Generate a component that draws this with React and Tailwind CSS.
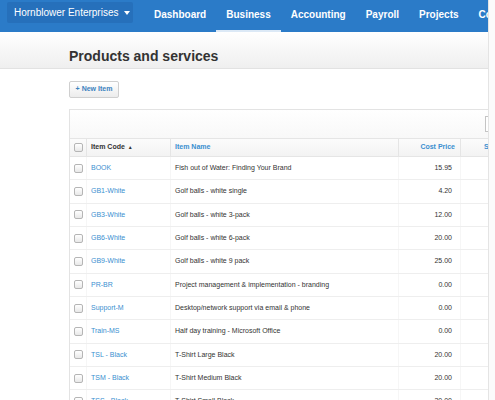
import React from 'react';

const navItems = ['Dashboard', 'Business', 'Accounting', 'Payroll', 'Projects', 'Contacts'];

const items = [
  ['BOOK', 'Fish out of Water: Finding Your Brand', '15.95'],
  ['GB1-White', 'Golf balls - white single', '4.20'],
  ['GB3-White', 'Golf balls - white 3-pack', '12.00'],
  ['GB6-White', 'Golf balls - white 6-pack', '20.00'],
  ['GB9-White', 'Golf balls - white 9 pack', '25.00'],
  ['PR-BR', 'Project management & implementation - branding', '0.00'],
  ['Support-M', 'Desktop/network support via email & phone', '0.00'],
  ['Train-MS', 'Half day training - Microsoft Office', '0.00'],
  ['TSL - Black', 'T-Shirt Large Black', '20.00'],
  ['TSM - Black', 'T-Shirt Medium Black', '20.00'],
  ['TSS - Black', 'T-Shirt Small Black', '20.00'],
];

const Checkbox = () => (
  <span className="block w-[9px] h-[9px] rounded-[2px] border border-[#b5b5b5] bg-gradient-to-b from-white to-[#e8e8e8]" />
);

const App = () => {
  return (
    <div className="flex w-[495px] h-[400px] overflow-hidden bg-white text-[#333] font-['Liberation_Sans',Arial,sans-serif]">

      {/* ── Main column ── */}
      <div className="w-[488px] shrink-0 overflow-hidden">

        {/* ── Navbar ── */}
        <nav className="h-[32px] bg-[#2b7bc8] flex items-start pt-[2px] pl-[7px] whitespace-nowrap">
          <div className="h-[21px] w-[126px] shrink-0 rounded-[2px] bg-[#2670bb] flex items-center pl-[7px] gap-[5px] text-white text-[10px]">
            Hornblower Enterprises
            <span className="w-0 h-0 border-l-[3px] border-r-[3px] border-t-[4px] border-l-transparent border-r-transparent border-t-white" />
          </div>
          <ul className="flex ml-[11px]">
            {navItems.map((n) => (
              <li
                key={n}
                className={
                  'h-[30px] px-[10px] flex items-start pt-[5px] text-white text-[10px] font-bold ' +
                  (n === 'Business' ? 'border-b-2 border-[#dce9f6]' : '')
                }
              >
                {n}
              </li>
            ))}
          </ul>
        </nav>

        {/* ── Page header ── */}
        <div className="h-[37px] bg-gradient-to-b from-white to-[#efefef] border-b border-[#e2e2e2] pl-[69px] pt-[16px]">
          <h1 className="text-[14px] leading-[16px] font-bold text-[#333]">Products and services</h1>
        </div>

        {/* ── Content ── */}
        <div className="pl-[69px] pt-[12px]">
          <button className="h-[17px] w-[50px] rounded-[2px] border border-[#cfcfcf] bg-gradient-to-b from-white to-[#ececec] text-[7px] font-bold text-[#3c82bf] flex items-center justify-center">
            + New Item
          </button>

          {/* ── Table panel ── */}
          <div className="mt-[11px] w-[560px] border border-[#e3e3e3]">
            <div className="h-[28px] bg-gradient-to-b from-white to-[#f8f8f8] flex items-start pt-[6px] pl-[415px]">
              <div className="h-[16px] w-[120px] border border-[#c4c4c4] bg-white" />
            </div>

            {/* Header row */}
            <div className="h-[19px] flex items-stretch border-t border-b border-[#e5e5e5] bg-gradient-to-b from-[#fbfbfb] to-[#f3f3f3] text-[7px] font-bold">
              <div className="w-[17px] flex items-center justify-center border-r border-[#e5e5e5]"><Checkbox /></div>
              <div className="w-[84px] flex items-center pl-[4px] border-r border-[#e5e5e5] text-[#333] gap-[3px]">
                Item Code <span className="text-[5px]">▲</span>
              </div>
              <div className="w-[228px] flex items-center pl-[4px] border-r border-[#e5e5e5] text-[#3a8fd0]">Item Name</div>
              <div className="w-[62px] flex items-center justify-end pr-[5px] border-r border-[#e5e5e5] text-[#3a8fd0]">Cost Price</div>
              <div className="w-[80px] flex items-center pl-[23px] text-[#3a8fd0]">Sale Price</div>
            </div>

            {/* Body rows */}
            {items.map(([code, name, cost]) => (
              <div key={code} className="h-[23.33px] flex items-stretch border-b border-[#eeeeee] text-[7px]">
                <div className="w-[17px] flex items-center justify-center border-r border-[#f6f6f6]"><Checkbox /></div>
                <div className="w-[84px] flex items-center pl-[4px] border-r border-[#f6f6f6] text-[#3a8fd0]">{code}</div>
                <div className="w-[228px] flex items-center pl-[4px] border-r border-[#f6f6f6] text-[#333] whitespace-nowrap">{name}</div>
                <div className="w-[62px] flex items-center justify-end pr-[8px] border-r border-[#f6f6f6] text-[#333]">{cost}</div>
                <div className="w-[80px]" />
              </div>
            ))}
          </div>
        </div>
      </div>

      {/* ── Scroll track ── */}
      <div className="w-[7px] shrink-0 border-l border-[#e4e4e4] bg-[#fbfbfb]" />
    </div>
  );
};

export default App;
